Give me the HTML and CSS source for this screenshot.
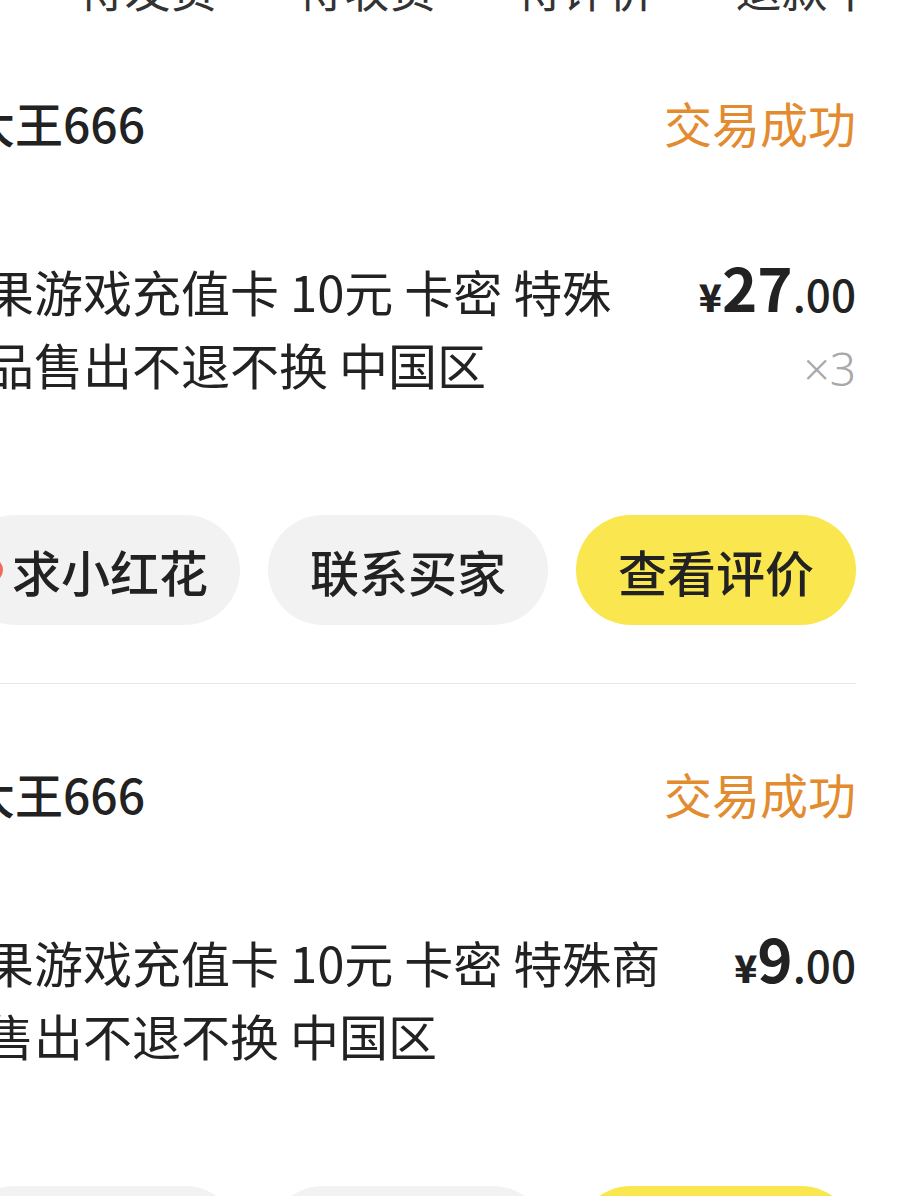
FILE: index.html
```html
<!DOCTYPE html>
<html lang="zh-CN">
<head>
  <meta charset="UTF-8" />
  <meta name="viewport" content="width=device-width, initial-scale=1" />
  <title>我卖出的</title>
  <link rel="stylesheet" href="styles.css">
</head>
<body>

  <nav class="tabs">
    <span class="tab">待发货</span>
    <span class="tab">待收货</span>
    <span class="tab">待评价</span>
    <span class="tab">退款中</span>
  </nav>

  <div class="list">
    <!-- 订单 1 -->
    <div class="order">
      <div class="order-head">
        <span class="buyer">大王666</span>
        <span class="status">交易成功</span>
      </div>
      <div class="order-body">
        <p class="title">苹果游戏充值卡 10元 卡密 特殊商品售出不退不换 中国区</p>
        <div class="price-col">
          <div class="price"><span class="yen">¥</span><span class="int">27</span><span class="dec">.00</span></div>
          <div class="qty">×3</div>
        </div>
      </div>
      <div class="actions">
        <button class="btn btn-flower">
          <svg class="flower" width="30" height="30" viewBox="0 0 30 30"><circle cx="15" cy="15" r="12" fill="#f06a5a"/><circle cx="15" cy="15" r="5" fill="#ffd24a"/></svg>
          求小红花
        </button>
        <button class="btn">联系买家</button>
        <button class="btn btn-primary">查看评价</button>
      </div>
    </div>

    <!-- 订单 2 -->
    <div class="order">
      <div class="order-head">
        <span class="buyer">大王666</span>
        <span class="status">交易成功</span>
      </div>
      <div class="order-body">
        <p class="title">苹果游戏充值卡 10元 卡密 特殊商品售出不退不换 中国区</p>
        <div class="price-col">
          <div class="price"><span class="yen">¥</span><span class="int">9</span><span class="dec">.00</span></div>
        </div>
      </div>
      <div class="actions">
        <button class="btn btn-flower">
          <svg class="flower" width="30" height="30" viewBox="0 0 30 30"><circle cx="15" cy="15" r="12" fill="#f06a5a"/><circle cx="15" cy="15" r="5" fill="#ffd24a"/></svg>
          求小红花
        </button>
        <button class="btn">联系买家</button>
        <button class="btn btn-primary">查看评价</button>
      </div>
    </div>
  </div>

</body>
</html>
```

FILE: styles.css
```css
html, body {
  overflow: hidden;
}

body {
  margin: 0;
  background: #fff;
  color: #222;
  font-family: 'Noto Sans CJK SC', 'Noto Sans', sans-serif;
}

.tabs {
  display: flex;
  margin-top: -43px;
  padding-left: 38px;
  height: 60px;
}

.tab {
  flex: none;
  width: 219px;
  text-align: center;
  font-size: 46px;
  line-height: 60px;
  color: #333;
}

.list {
  margin-left: -64px;
  padding-right: 56px;
}

.order {
  padding: 73px 0 58px;
  border-bottom: 1px solid #e6e6e6;
}

.order + .order {
  padding-top: 77px;
}

.order-head {
  display: flex;
  justify-content: space-between;
  align-items: center;
  height: 64px;
  padding-left: 31px;
  font-size: 48px;
}

.buyer {
  font-weight: 500;
  color: #222;
}

.status {
  color: #e38b2f;
}

.order-body {
  display: flex;
  margin-top: 100px;
}

.title {
  flex: 1;
  margin: 0;
  font-size: 49px;
  line-height: 73px;
  color: #222;
}

.price-col {
  flex: none;
  margin-left: 40px;
  text-align: right;
}

.price {
  height: 73px;
  font-size: 49px;
  line-height: 73px;
  font-weight: 700;
  color: #222;
}

.price span {
  line-height: 0;
}

.yen {
  font-size: 38px;
  font-weight: 900;
}

.int {
  font-size: 60px;
}

.dec {
  font-size: 44px;
  font-weight: 500;
}

.qty {
  height: 73px;
  line-height: 83px;
  font-family: 'Noto Sans', sans-serif;
  font-size: 46px;
  font-weight: 300;
  color: #a8a8a8;
}

.actions {
  display: flex;
  justify-content: flex-end;
  gap: 28px;
  margin-top: 115px;
}

.btn {
  flex: none;
  display: flex;
  align-items: center;
  justify-content: center;
  gap: 6px;
  width: 280px;
  height: 110px;
  padding: 0;
  border: none;
  border-radius: 55px;
  background: #f2f2f2;
  color: #222;
  font-family: inherit;
  font-size: 49px;
  font-weight: 500;
}

.btn-flower {
  padding-right: 16px;
}

.btn-primary {
  background: #fae74f;
}

.flower {
  flex: none;
}
```
